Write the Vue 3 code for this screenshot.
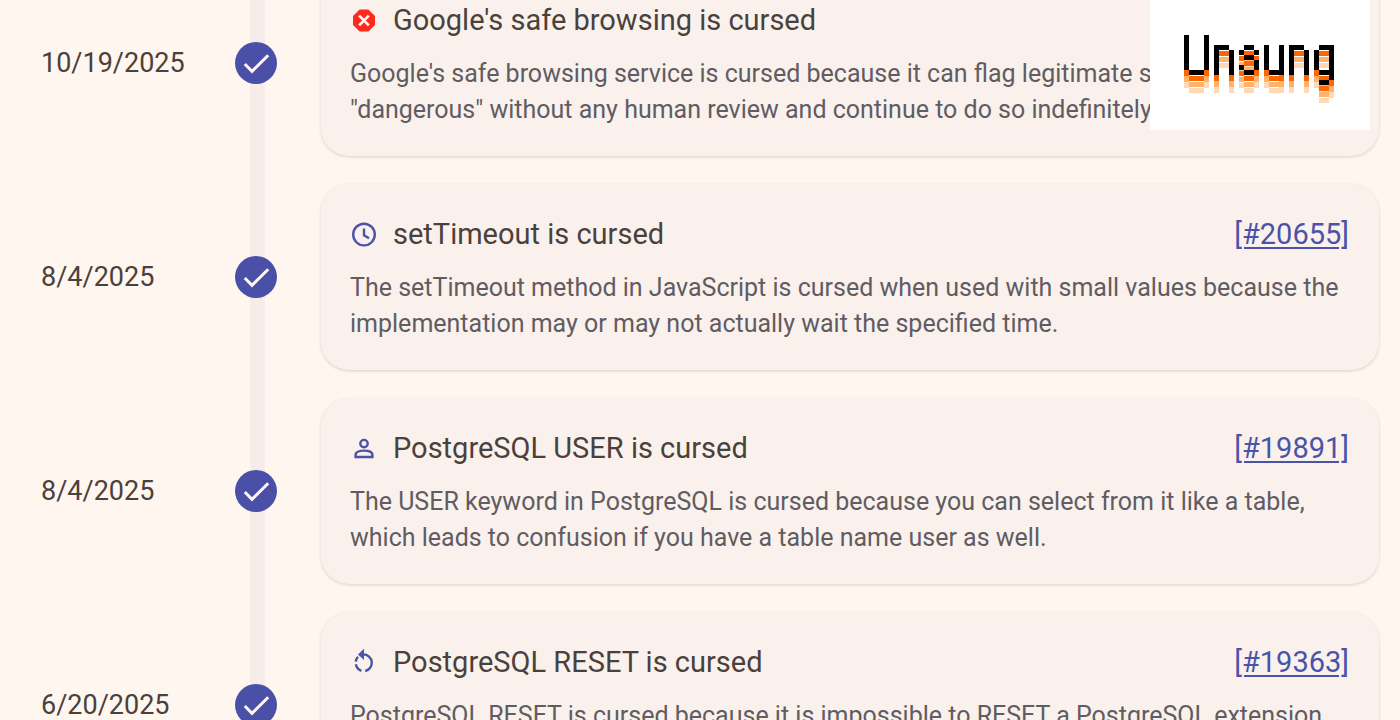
<template>
  <main class="page">
    <ol class="timeline">
      <li v-for="entry in entries" :key="entry.title" class="entry">
        <time class="date">{{ entry.date }}</time>

        <div class="rail">
          <span class="marker">
            <svg width="42" height="42" viewBox="0 0 42 42" aria-hidden="true">
              <path d="M9.8 22L17 29.3L33.2 13.2" />
            </svg>
          </span>
        </div>

        <article class="card">
          <header class="card-header">
            <svg class="icon" width="28" height="28" viewBox="0 0 28 28" aria-hidden="true">
              <template v-if="entry.icon === 'stop'">
                <path class="octagon" d="M9.6 3.5H18.4L25 10.1V18.9L18.4 25.5H9.6L3 18.9V10.1Z" />
                <path class="cross" d="M9.2 9.7L18.8 19.3M18.8 9.7L9.2 19.3" />
              </template>
              <template v-else-if="entry.icon === 'clock'">
                <circle cx="14" cy="14.6" r="10.8" />
                <path d="M14 8.6V15.2L19 18.2" />
              </template>
              <template v-else-if="entry.icon === 'user'">
                <circle cx="14" cy="9.6" r="3.7" />
                <path d="M5.6 23V20.8C5.6 17.6 10.5 16.6 14 16.6S22.4 17.6 22.4 20.8V23Z" />
              </template>
              <template v-else>
                <path d="M13.4 6.4A8.4 8.4 0 0 1 15.2 23" />
                <path d="M8 8.8A8.4 8.4 0 0 0 5.8 13.6" />
                <path d="M5.9 16.2A8.4 8.4 0 0 0 11.4 22.8" />
                <path class="arrow" d="M14 0.8V12L8 6.4Z" />
              </template>
            </svg>
            <h2 class="title">{{ entry.title }}</h2>
            <a class="issue" :href="'#' + entry.issue">[#{{ entry.issue }}]</a>
          </header>
          <p class="text">{{ entry.text }}</p>
        </article>
      </li>
    </ol>

    <div class="logo">
      <svg width="150" height="70" viewBox="0 0 150 70" role="img" aria-label="Unsung">
        <path
          v-for="layer in logoLayers"
          :key="layer.color"
          :d="logoPath"
          :fill="layer.color"
          :transform="`translate(0 ${layer.offset}) scale(5)`"
        />
      </svg>
    </div>
  </main>
</template>

<script setup>
const entries = [
  {
    date: '10/19/2025',
    icon: 'stop',
    title: "Google's safe browsing is cursed",
    issue: 23046,
    text: 'Google\'s safe browsing service is cursed because it can flag legitimate sites as\n"dangerous" without any human review and continue to do so indefinitely.'
  },
  {
    date: '8/4/2025',
    icon: 'clock',
    title: 'setTimeout is cursed',
    issue: 20655,
    text: 'The setTimeout method in JavaScript is cursed when used with small values because the\nimplementation may or may not actually wait the specified time.'
  },
  {
    date: '8/4/2025',
    icon: 'user',
    title: 'PostgreSQL USER is cursed',
    issue: 19891,
    text: 'The USER keyword in PostgreSQL is cursed because you can select from it like a table,\nwhich leads to confusion if you have a table name user as well.'
  },
  {
    date: '6/20/2025',
    icon: 'reset',
    title: 'PostgreSQL RESET is cursed',
    issue: 19363,
    text: 'PostgreSQL RESET is cursed because it is impossible to RESET a PostgreSQL extension\nparameter.'
  }
];

// pixel logo, one unit per pixel
const logoPath = [
  'M0 0h1v7h3v-7h1v7h-1v1h-3v-1h-1z',
  'M6 2h3v1h1v5h-1v-5h-2v5h-1z',
  'M12 2h2v1h-2zM11 3h1v1h-1zM14 3h1v1h-1zM12 4h2v1h-2zM14 5h1v2h-1zM11 6h1v1h-1zM12 7h2v1h-2z',
  'M16 2h1v5h2v-5h1v6h-3v-1h-1z',
  'M21 2h3v1h1v5h-1v-5h-2v5h-1z',
  'M27 2h3v7h-1v-1h-2v-1h2v-4h-2zM26 3h1v4h-1zM27 9h2v1h-2z'
].join('');

const logoLayers = [
  { color: '#ffd9b5', offset: 18 },
  { color: '#ffb26b', offset: 12 },
  { color: '#ff6600', offset: 6 },
  { color: '#000000', offset: 0 }
];
</script>

<style>
body {
  background: #fff6f0;
}
</style>

<style scoped>
.page {
  position: relative;
  height: 100vh;
  overflow: hidden;
  font-family: Roboto, "Liberation Sans", sans-serif;
  color: #4a413c;
}

.timeline {
  list-style: none;
  margin: -44px 0 0;
  padding: 0 21px 0 41px;
}

.entry {
  display: grid;
  grid-template-columns: 194px 42px minmax(0, 1fr);
}

.date {
  align-self: center;
  font-size: 27px;
  line-height: 36px;
}

.rail {
  position: relative;
  display: flex;
  align-items: center;
}

.rail::before {
  content: "";
  position: absolute;
  top: 0;
  bottom: 0;
  left: 15px;
  width: 15px;
  background: #f6ece9;
}

.marker {
  position: relative;
  display: flex;
  border-radius: 50%;
  background: #4a50a7;
}

.marker path {
  fill: none;
  stroke: #fff6f0;
  stroke-width: 3;
}

.card {
  margin: 14px 0 14px 44px;
  padding: 32px 30px 28px 29px;
  border-radius: 28px;
  background: #faf1ed;
  box-shadow: 0 1px 3px rgba(80, 50, 50, 0.2);
}

.card-header {
  display: flex;
  align-items: center;
  margin-bottom: 18px;
}

.icon {
  flex: none;
  margin-right: 15px;
  fill: none;
  stroke: #4a53a8;
  stroke-width: 2.4;
}

.octagon {
  fill: #ff2a1f;
  stroke: none;
}

.cross {
  stroke: #fff6f0;
  stroke-width: 2.6;
}

.arrow {
  fill: #4a53a8;
  stroke: none;
}

.title {
  flex: 1;
  margin: 0;
  font-size: 29px;
  font-weight: 400;
  line-height: 36px;
}

.issue {
  color: #4a53a8;
  font-size: 29px;
  line-height: 36px;
  text-decoration-thickness: 2px;
  text-underline-offset: 3px;
}

.text {
  margin: 0;
  color: #605c62;
  font-size: 25px;
  line-height: 36px;
  white-space: pre-line;
}

.logo {
  position: absolute;
  top: 0;
  right: 30px;
  display: flex;
  padding: 35px 36px 25px 34px;
  background: #ffffff;
}
</style>
